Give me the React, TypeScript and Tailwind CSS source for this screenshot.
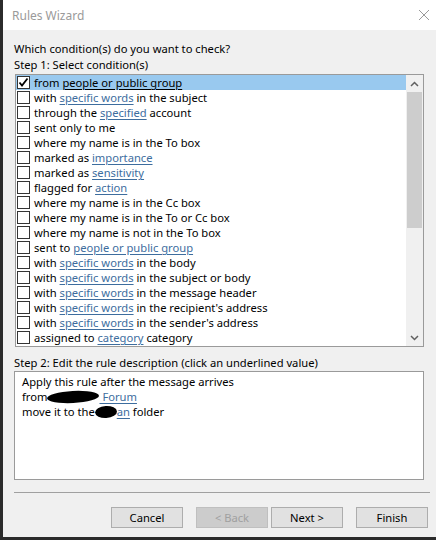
import React from "react";

type Part = string | { link: string };

const conditions: Part[][] = [
  ["from ", { link: "people or public group" }],
  ["with ", { link: "specific words" }, " in the subject"],
  ["through the ", { link: "specified" }, " account"],
  ["sent only to me"],
  ["where my name is in the To box"],
  ["marked as ", { link: "importance" }],
  ["marked as ", { link: "sensitivity" }],
  ["flagged for ", { link: "action" }],
  ["where my name is in the Cc box"],
  ["where my name is in the To or Cc box"],
  ["where my name is not in the To box"],
  ["sent to ", { link: "people or public group" }],
  ["with ", { link: "specific words" }, " in the body"],
  ["with ", { link: "specific words" }, " in the subject or body"],
  ["with ", { link: "specific words" }, " in the message header"],
  ["with ", { link: "specific words" }, " in the recipient's address"],
  ["with ", { link: "specific words" }, " in the sender's address"],
  ["assigned to ", { link: "category" }, " category"],
];

const Checkbox = ({ checked }: { checked?: boolean }) => (
  <div className="w-[13px] h-[13px] border border-[#333333] bg-white shrink-0 flex items-center justify-center">
    {checked && (
      <svg width="11" height="11" viewBox="0 0 11 11">
        <path d="M1.5 5.5 L4 8.5 L9.5 1.5" fill="none" stroke="#000" strokeWidth="1.8" />
      </svg>
    )}
  </div>
);

const Blob = ({ w }: { w: number }) => (
  <span
    className="inline-block h-[12px] bg-black rounded-[50%] align-middle -rotate-3"
    style={{ width: w }}
  />
);

export default function App() {
  return (
    <div className="w-[436px] h-[540px] flex flex-col bg-[#f0f0f0] text-[11.2px] leading-[15px] text-black overflow-hidden" style={{ fontFamily: '"Noto Sans", "Open Sans", sans-serif' }}>
      <div className="flex flex-1">
        <div className="w-[3px] bg-[#2b2b2b] shrink-0" />
        <div className="flex-1 flex flex-col">
          <div className="h-[30px] bg-white flex items-center justify-between pl-[9px] pr-[6px]">
            <span className="text-[12px] text-[#9a9a9a]">Rules Wizard</span>
            <svg width="12" height="12" viewBox="0 0 12 12">
              <path d="M1 1 L11 11 M11 1 L1 11" stroke="#9a9a9a" strokeWidth="1" />
            </svg>
          </div>
          <div className="flex flex-col pl-[11px] pr-[12px] pt-[11px]">
            <div>Which condition(s) do you want to check?</div>
            <div className="mt-[1px]">Step 1: Select condition(s)</div>
            <div className="mt-[2px] ml-[1px] h-[273px] border border-[#9a9a9a] bg-white flex">
              <div className="flex-1 flex flex-col">
                {conditions.map((parts, i) => (
                  <div
                    key={i}
                    className={`h-[15px] flex items-center gap-[4px] pl-[1px] whitespace-nowrap overflow-hidden ${i === 0 ? "bg-[#99c9ef]" : ""}`}
                  >
                    <Checkbox checked={i === 0} />
                    <span>
                      {parts.map((p, j) =>
                        typeof p === "string" ? (
                          <span key={j}>{p}</span>
                        ) : (
                          <span key={j} className={`underline underline-offset-2 ${i === 0 ? "text-black" : "text-[#3d6d9e]"}`}>
                            {p.link}
                          </span>
                        )
                      )}
                    </span>
                  </div>
                ))}
              </div>
              <div className="w-[17px] bg-[#f0f0f0] flex flex-col shrink-0">
                <div className="h-[17px] flex items-center justify-center">
                  <svg width="9" height="6" viewBox="0 0 9 6">
                    <path d="M1 5 L4.5 1.5 L8 5" fill="none" stroke="#606060" strokeWidth="1.5" />
                  </svg>
                </div>
                <div className="mx-[1px] h-[136px] bg-[#cdcdcd]" />
                <div className="flex-1" />
                <div className="h-[17px] flex items-center justify-center">
                  <svg width="9" height="6" viewBox="0 0 9 6">
                    <path d="M1 1 L4.5 4.5 L8 1" fill="none" stroke="#606060" strokeWidth="1.5" />
                  </svg>
                </div>
              </div>
            </div>
            <div className="mt-[8px]">Step 2: Edit the rule description (click an underlined value)</div>
            <div className="mt-[1px] h-[109px] border border-[#9a9a9a] bg-white pl-[7px] pt-[2px]">
              <div>Apply this rule after the message arrives</div>
              <div className="flex items-center whitespace-nowrap">
                <span>from</span>
                <Blob w={52} />
                <span className="underline underline-offset-2 text-[#3d6d9e]">&nbsp;Forum</span>
              </div>
              <div className="flex items-center whitespace-nowrap">
                <span>move it to the</span>
                <Blob w={22} />
                <span className="underline underline-offset-2 text-[#3d6d9e]">an</span>
                <span>&nbsp;folder</span>
              </div>
            </div>
            <div className="mt-[12px] h-px bg-[#a0a0a0] mr-[-6px]" />
            <div className="mt-[14px] flex justify-end gap-[3px] mr-[-4px]">
              <button className="w-[72px] h-[21px] bg-[#e1e1e1] border border-[#adadad] mr-[10px]">Cancel</button>
              <button className="w-[72px] h-[21px] bg-[#cccccc] border border-[#bfbfbf] text-[#a0a0a0]">&lt; Back</button>
              <button className="w-[72px] h-[21px] bg-[#e1e1e1] border border-[#adadad] mr-[10px]">Next &gt;</button>
              <button className="w-[72px] h-[21px] bg-[#e1e1e1] border border-[#adadad]">Finish</button>
            </div>
          </div>
        </div>
      </div>
      <div className="h-[3px] bg-[#2b2b2b] shrink-0" />
    </div>
  );
}
